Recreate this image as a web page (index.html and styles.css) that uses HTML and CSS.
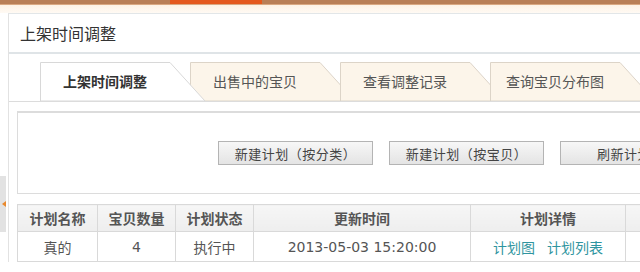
FILE: index.html
```html
<!DOCTYPE html>
<html lang="zh-CN">
<head>
    <meta charset="UTF-8">
    <title>上架时间调整</title>
    <link rel="stylesheet" href="styles.css">
</head>
<body>
    <div class="topbar"><span class="topbar-active"></span></div>
    <div class="topbar-shade"></div>

    <div class="page">
        <div class="side-handle"><span class="side-arrow"></span></div>

        <div class="panel">
            <div class="panel-title">上架时间调整</div>
            <div class="panel-body">
                <div class="tabs">
                    <div class="tab active">
                        <svg class="tab-bg" width="166" height="39" viewBox="0 0 166 39"><polygon points="0.5,39 0.5,0.5 130,0.5 165,39" /></svg>
                        <span class="tab-label">上架时间调整</span>
                    </div>
                    <div class="tab">
                        <svg class="tab-bg" width="166" height="39" viewBox="0 0 166 39"><polygon points="0.5,39 0.5,0.5 130,0.5 165,39" /></svg>
                        <span class="tab-label">出售中的宝贝</span>
                    </div>
                    <div class="tab">
                        <svg class="tab-bg" width="166" height="39" viewBox="0 0 166 39"><polygon points="0.5,39 0.5,0.5 130,0.5 165,39" /></svg>
                        <span class="tab-label">查看调整记录</span>
                    </div>
                    <div class="tab">
                        <svg class="tab-bg" width="166" height="39" viewBox="0 0 166 39"><polygon points="0.5,39 0.5,0.5 130,0.5 165,39" /></svg>
                        <span class="tab-label">查询宝贝分布图</span>
                    </div>
                </div>

                <div class="toolbar">
                    <button class="btn">新建计划（按分类）</button>
                    <button class="btn">新建计划（按宝贝）</button>
                    <button class="btn">刷新计划列表</button>
                </div>

                <table class="plans">
                    <thead>
                        <tr>
                            <th class="c-name">计划名称</th>
                            <th class="c-count">宝贝数量</th>
                            <th class="c-state">计划状态</th>
                            <th class="c-time">更新时间</th>
                            <th class="c-detail">计划详情</th>
                            <th class="c-more">当前操作</th>
                        </tr>
                    </thead>
                    <tbody>
                        <tr>
                            <td>真的</td>
                            <td>4</td>
                            <td>执行中</td>
                            <td>2013-05-03 15:20:00</td>
                            <td><a href="#">计划图</a><a href="#">计划列表</a></td>
                            <td></td>
                        </tr>
                    </tbody>
                </table>
            </div>
        </div>
    </div>
</body>
</html>
```

FILE: styles.css
```css
body {
    margin: 0;
    width: 760px;
    font-family: "DejaVu Sans", "Noto Sans CJK SC", sans-serif;
    color: #444;
    background-color: #fff;
    overflow: hidden;
}
.topbar {
    height: 4px;
    background-color: #b97e55;
    border-bottom: 1px solid #d9a780;
    padding-left: 170px;
}
.topbar-active {
    display: block;
    width: 92px;
    height: 4px;
    background-color: #e4581c;
}
.topbar-shade {
    height: 8px;
    background: linear-gradient(#fdf1e3, #fffaf4);
}
.page {
    display: flex;
    align-items: flex-start;
}
.side-handle {
    width: 6px;
    height: 56px;
    margin-top: 163px;
    margin-right: 2px;
    background-color: #e2e2e2;
    display: flex;
    align-items: center;
    justify-content: flex-end;
}
.side-arrow {
    width: 0;
    height: 0;
    border-top: 3px solid transparent;
    border-bottom: 3px solid transparent;
    border-right: 4px solid #e8892e;
}
.panel {
    flex: 1;
    border-top: 1px solid #e2e6e8;
    border-left: 1px solid #e2e2e2;
}
.panel-title {
    height: 38px;
    line-height: 42px;
    padding-left: 11px;
    font-size: 16px;
    color: #333;
    border-bottom: 2px solid #dfe4e7;
}
.panel-body {
    padding: 8px 0 0 8px;
}
.tabs {
    display: flex;
    padding-left: 31px;
    height: 39px;
    border-bottom: 1px solid #dcdcdc;
    margin-left: -8px;
}
.tab {
    position: relative;
    width: 150px;
    height: 39px;
    flex: none;
}
.tab-bg {
    position: absolute;
    left: 0;
    top: 0;
}
.tab-bg polygon {
    fill: #fcf5ea;
    stroke: #dcd4c8;
    stroke-width: 1;
}
.tab-label {
    position: relative;
    display: block;
    width: 130px;
    text-align: center;
    line-height: 40px;
    font-size: 14px;
    color: #555;
}
.tab.active {
    z-index: 5;
    height: 40px;
}
.tab.active .tab-bg polygon {
    fill: #fff;
    stroke: #d8d8d8;
}
.tab.active .tab-label {
    font-weight: bold;
    color: #333;
}
.toolbar {
    margin-top: 9px;
    height: 80px;
    border: 1px solid #dcdcdc;
    border-top-width: 2px;
    border-right: none;
    display: flex;
    align-items: center;
    gap: 16px;
    padding-left: 200px;
}
.btn {
    flex: none;
    width: 155px;
    height: 24px;
    padding: 0;
    font-family: "Noto Sans CJK SC", sans-serif;
    font-size: 13px;
    letter-spacing: 0.5px;
    color: #444;
    background: linear-gradient(#f7f7f7, #e4e4e4);
    border: 1px solid #b4b4b4;
}
.plans {
    margin-top: 10px;
    border-collapse: collapse;
    font-size: 14px;
    color: #555;
}
.plans th,
.plans td {
    border: 1px solid #d9d9d9;
    text-align: center;
    padding: 0;
}
.plans th {
    height: 26px;
    font-weight: bold;
    color: #555;
    background: linear-gradient(#f6f6f6, #eeeeee);
}
.plans td {
    height: 29px;
}
.plans a {
    color: #2f95a0;
    text-decoration: none;
    margin: 0 6px;
}
.c-name { width: 79px; }
.c-count { width: 77px; }
.c-state { width: 77px; }
.c-time { width: 216px; }
.c-detail { width: 154px; }
.c-more { width: 120px; }
```
